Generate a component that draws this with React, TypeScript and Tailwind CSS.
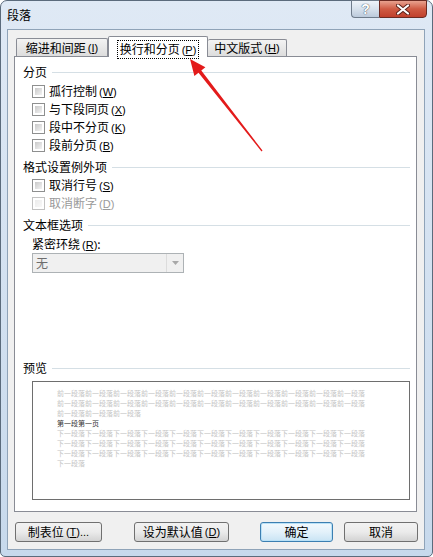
// Word "段落" dialog - 换行和分页 tab

const cjk = "font-['Noto_Sans_CJK_SC','Noto_Sans',sans-serif]";

function Key({ k }: { k: string }) {
  return (
    <span className="ml-[2px] font-['Liberation_Sans',sans-serif] text-[11px]">
      (<span className="underline">{k}</span>)
    </span>
  );
}

function Section({ title, className = '' }: { title: string; className?: string }) {
  return (
    <div className={`flex items-center h-[16px] leading-[16px] ${className}`}>
      <span>{title}</span>
      <div className="ml-[5px] flex-1 h-px bg-[#d5dfe5]" />
    </div>
  );
}

function Check({ label, k, disabled, className = '' }: { label: string; k: string; disabled?: boolean; className?: string }) {
  return (
    <div className={`flex items-center h-[18px] pl-[9px] ${className}`}>
      <div
        className={`w-[13px] h-[13px] border p-[2px] bg-white ${
          disabled ? 'border-[#c2c2c2]' : 'border-[#8e8f8f]'
        }`}
      >
        <div
          className={`w-full h-full bg-gradient-to-br ${
            disabled ? 'from-[#ececec] to-[#f8f8f8]' : 'from-[#c9c9c9] to-[#f3f3f3]'
          }`}
        />
      </div>
      <span className={`ml-[4px] leading-[16px] ${disabled ? 'text-[#9a9a9a]' : 'text-black'}`}>
        {label}
        <Key k={k} />
      </span>
    </div>
  );
}

function Button({ children, w, primary, className = '' }: { children: React.ReactNode; w: string; primary?: boolean; className?: string }) {
  return (
    <div
      className={`${w} h-[20px] flex items-center justify-center rounded-[3px] border text-[12px] leading-[16px] ${
        primary
          ? 'border-[#3c7fb1] bg-gradient-to-b from-[#f2f9fd] via-[#e3f1fa] to-[#c9e4f4] shadow-[inset_0_0_0_1px_#b9e1f7]'
          : 'border-[#707070] bg-gradient-to-b from-[#f2f2f2] via-[#ebebeb] to-[#d3d3d3]'
      } ${className}`}
    >
      {children}
    </div>
  );
}

const prevLines = [
  '前一段落'.repeat(11),
  '前一段落'.repeat(11),
  '前一段落'.repeat(3),
];
const nextLines = [
  '下一段落'.repeat(11),
  '下一段落'.repeat(11),
  '下一段落'.repeat(11),
  '下一段落',
];

export default function App() {
  return (
    <div className={`relative w-[433px] h-[557px] flex flex-col rounded-t-[7px] rounded-b-[5px] border border-[#5b6b7c] bg-gradient-to-b from-[#dfe9f5] to-[#c7d9ec] text-[12px] text-black ${cjk}`}>
      {/* title bar */}
      <div className="h-[28px] flex items-start">
        <div className="pl-[6px] mt-[6px] leading-[16px] text-[12px]">段落</div>
        <div className="ml-auto mr-[5px] -mt-px flex">
          <div className="w-[28px] h-[18px] flex items-center justify-center rounded-bl-[4px] border border-[#6e7b8a] border-r-0 bg-gradient-to-b from-[#eef3f9] via-[#d7e1ec] to-[#bccadb] text-[14px] font-bold text-white [text-shadow:0_0_1px_#44505e,0_0_1px_#44505e] font-['Liberation_Sans',sans-serif]">
            ?
          </div>
          <div className="w-[48px] h-[18px] flex items-center justify-center rounded-br-[4px] border border-[#6b2a22] bg-gradient-to-b from-[#e8a18f] via-[#cf5a43] to-[#c0402c]">
            <svg width="14" height="11" viewBox="0 0 14 11">
              <path d="M2 1.5 L12 9.5 M12 1.5 L2 9.5" stroke="#5a2018" strokeWidth="4" strokeLinecap="round" />
              <path d="M2 1.5 L12 9.5 M12 1.5 L2 9.5" stroke="#ffffff" strokeWidth="2.2" strokeLinecap="round" />
            </svg>
          </div>
        </div>
      </div>

      {/* client area */}
      <div className="flex-1 ml-[6px] mr-[7px] mb-[6px] border border-[#8fa3b8] bg-[#f0f0f0] flex flex-col">
        {/* tabs */}
        <div className="mt-[6px] ml-[8px] h-[20px] flex items-end">
          <div className="w-[92px] h-[18px] flex items-center justify-center border border-b-0 border-[#898c95] rounded-t-[2px] bg-gradient-to-b from-[#f3f3f3] to-[#dddddd] leading-[16px]">
            缩进和间距<Key k="I" />
          </div>
          <div className="relative z-10 -mb-px w-[100px] h-[21px] flex items-start justify-center pt-[3px] border border-b-0 border-[#898c95] rounded-t-[2px] bg-white leading-[13px]">
            <span className="border border-dotted border-black px-[2px] py-[1px]">
              换行和分页<Key k="P" />
            </span>
          </div>
          <div className="w-[79px] h-[17px] flex items-center justify-center border border-b-0 border-l-0 border-[#898c95] rounded-t-[2px] bg-gradient-to-b from-[#f3f3f3] to-[#dddddd] leading-[16px]">
            中文版式<Key k="H" />
          </div>
        </div>

        {/* panel */}
        <div className="ml-[6px] w-[403px] h-[456px] border border-[#898c95] bg-white pl-[8px] pr-[6px] pt-[7px] flex flex-col">
          <Section title="分页" />
          <Check label="孤行控制" k="W" className="mt-[2px]" />
          <Check label="与下段同页" k="X" />
          <Check label="段中不分页" k="K" />
          <Check label="段前分页" k="B" />

          <Section title="格式设置例外项" className="mt-[5px]" />
          <Check label="取消行号" k="S" className="mt-[1px]" />
          <Check label="取消断字" k="D" disabled />

          <Section title="文本框选项" className="mt-[5px]" />
          <div className="mt-[3px] pl-[9px] h-[16px] leading-[16px]">
            紧密环绕<Key k="R" />:
          </div>
          <div className="mt-[1px] ml-[9px] w-[152px] h-[20px] flex border border-[#adb2b5] bg-[#f0f0f0]">
            <div className="flex-1 pl-[3px] leading-[18px] text-[#6d6d6d]">无</div>
            <div className="w-[17px] flex items-center justify-center border-l border-[#dcdcdc]">
              <svg width="7" height="4" viewBox="0 0 7 4">
                <path d="M0 0 L7 0 L3.5 4 Z" fill="#a8a8a8" />
              </svg>
            </div>
          </div>

          <Section title="预览" className="mt-[87px]" />
          <div className="mt-[5px] ml-[9px] w-[378px] h-[119px] border border-[#6e6e6e] pl-[24px] pt-[6px] text-[7px] leading-[10px] whitespace-nowrap">
            {prevLines.map((l, i) => (
              <div key={'p' + i} className="text-[#c4c4c4]">{l}</div>
            ))}
            <div className="text-[#333333]">第一段第一页</div>
            {nextLines.map((l, i) => (
              <div key={'n' + i} className="text-[#c4c4c4]">{l}</div>
            ))}
          </div>
        </div>

        {/* buttons */}
        <div className="mt-[10px] ml-[7px] flex">
          <Button w="w-[87px]">
            制表位<Key k="T" />
            <span className="font-['Liberation_Sans',sans-serif] text-[11px]">...</span>
          </Button>
          <Button w="w-[95px]" className="ml-[32px]">
            设为默认值<Key k="D" />
          </Button>
          <Button w="w-[73px]" primary className="ml-[31px]">
            确定
          </Button>
          <Button w="w-[74px]" className="ml-[11px]">
            取消
          </Button>
        </div>
      </div>

      {/* red annotation arrow */}
      <svg className="absolute -left-px -top-px pointer-events-none" width="433" height="557" viewBox="0 0 433 557">
        <polygon
          points="262.5,150.6 201.3,70.5 205.4,67.3 190,59 194.4,75.9 198.5,72.7 261.5,151.4"
          fill="#e31b1b"
        />
      </svg>
    </div>
  );
}
